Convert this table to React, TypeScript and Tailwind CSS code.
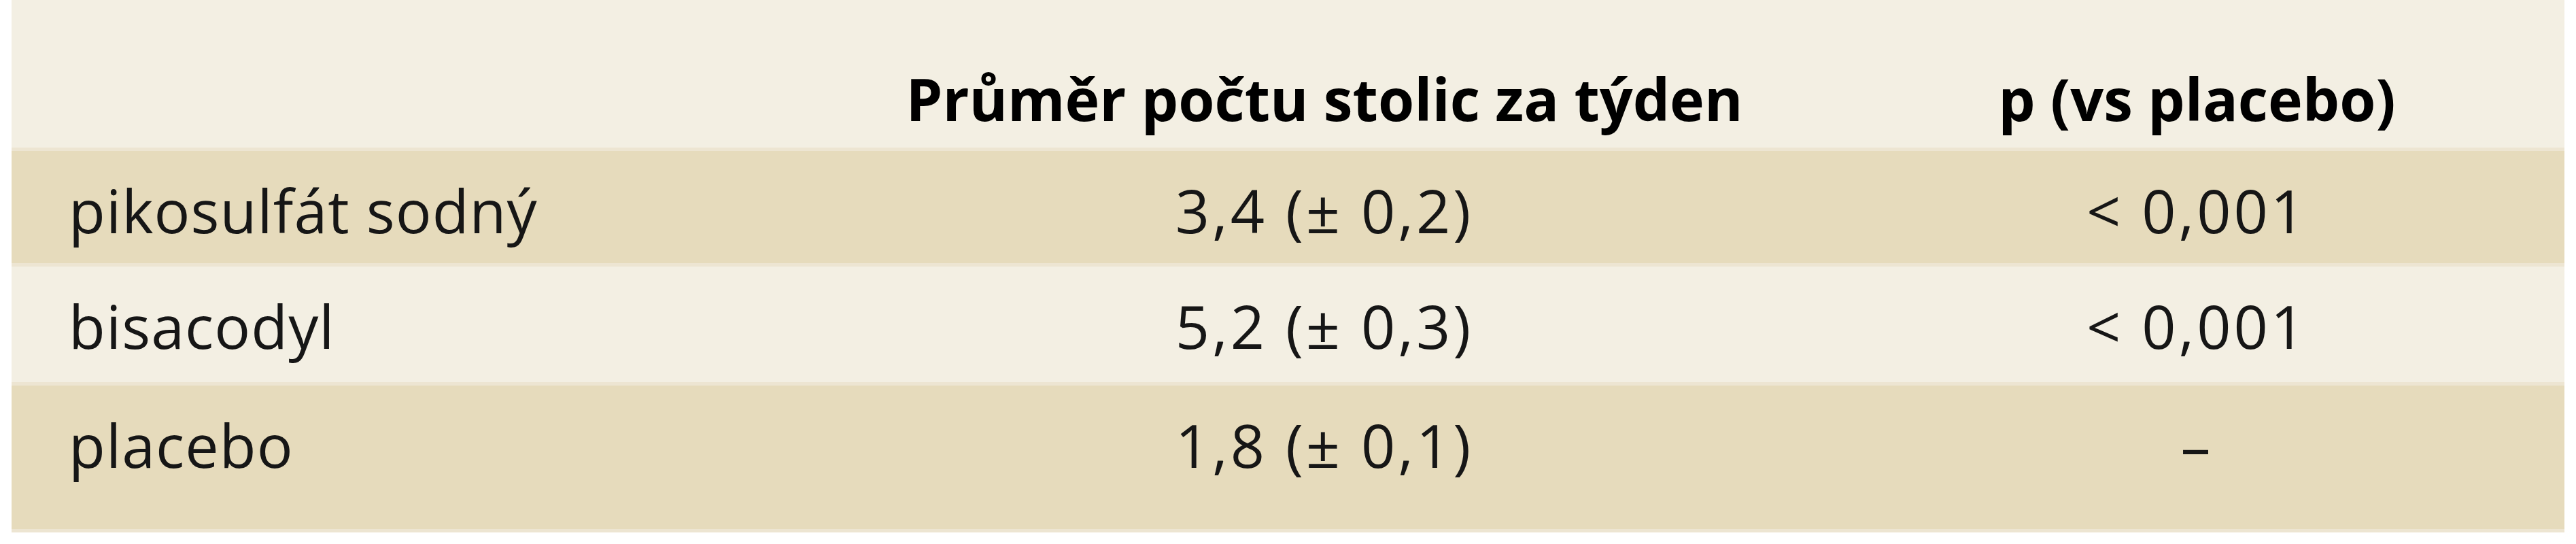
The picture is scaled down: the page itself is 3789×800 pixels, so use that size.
const rows = [
  { name: 'pikosulfát sodný', mean: '3,4 (± 0,2)', p: '< 0,001', tan: true },
  { name: 'bisacodyl', mean: '5,2 (± 0,3)', p: '< 0,001', tan: false },
  { name: 'placebo', mean: '1,8 (± 0,1)', p: '–', tan: true },
]

export default function App() {
  return (
    <div className="w-[3789px] h-[800px] bg-white font-['Open_Sans',sans-serif] leading-none text-[#161616]">
      <div className="ml-[17px] w-[3755px] flex flex-col">
        {/* header */}
        <div className="grid grid-cols-[1160px_1542px_1053px] h-[222px] pt-[102px] bg-[#f3efe3] border-b-[5px] border-[#ede5d2] text-[86px] font-bold text-black">
          <div />
          <div className="text-center">Průměr počtu stolic za týden</div>
          <div className="text-center pr-[28px]">p (vs placebo)</div>
        </div>

        {rows.map((r, i) => (
          <div
            key={r.name}
            className={
              'grid grid-cols-[1160px_1542px_1053px] pt-[43px] text-[88px] border-b-[5px] border-[#ede5d2] ' +
              (r.tan ? 'bg-[#e6dbbc] ' : 'bg-[#f3efe3] ') +
              (i === 0 ? 'h-[170px]' : i === 1 ? 'h-[175px]' : 'h-[216px]')
            }
          >
            <div className="pl-[84px] tracking-[0.012em]">{r.name}</div>
            <div className="text-center tracking-[0.045em]">{r.mean}</div>
            <div className="text-center pr-[28px] tracking-[0.045em]">{r.p}</div>
          </div>
        ))}
      </div>
    </div>
  )
}
